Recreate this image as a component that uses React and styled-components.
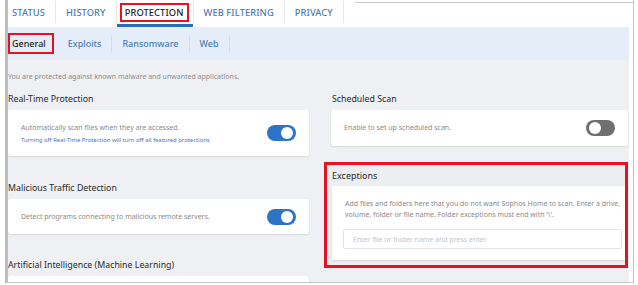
import React from "react";
import styled, { createGlobalStyle } from "styled-components";

const GlobalStyle = createGlobalStyle`
  html, body {
    margin: 0;
    padding: 0;
    background: #ffffff;
    font-family: "Noto Sans", "Liberation Sans", sans-serif;
  }
`;

const Page = styled.div`
  width: 638px;
  height: 285px;
  overflow: hidden;
  background: #fff;
  padding-left: 5px;
  box-sizing: border-box;
`;

const Frame = styled.div`
  width: 629px;
  height: 283px;
  box-sizing: border-box;
  border-left: 3px solid #bdbdbd;
  border-right: 1px solid #c4c4c4;
  border-bottom: 1px solid #c4c4c4;
  padding-right: 4px;
  overflow: hidden;
  display: flex;
  flex-direction: column;
`;

const TabBar = styled.div`
  display: flex;
  height: 27px;
  flex-shrink: 0;
  background: #fff;
`;

const Tab = styled.div`
  position: relative;
  display: flex;
  align-items: center;
  height: 22px;
  padding: ${(p) => (p.$active ? "0 4px 0 3px" : "0 10px")};
  font-size: 9.3px;
  font-weight: 500;
  letter-spacing: 0.1px;
  color: ${(p) => (p.$active ? "#222" : "#4a7db5")};
  border-right: 1px solid #e6e6e6;
  margin-top: 1px;
  &:first-child {
    padding-left: 4px;
  }
  ${(p) =>
    p.$active &&
    `
    &::after {
      content: "";
      position: absolute;
      left: 0;
      right: 0;
      bottom: -4px;
      height: 3px;
      background: #2a6db5;
    }
  `}
`;

const Marked = styled.span`
  border: 2px solid #e3141f;
  padding: ${(p) => p.$pad || "1px 3px"};
`;

const TopLine = styled.div`
  flex: 1;
  margin-left: 11px;
  margin-top: 2px;
  height: 0;
  border-top: 1px solid #c8c8c8;
  margin-right: -4px;
`;

const SubBar = styled.div`
  display: flex;
  align-items: center;
  height: 33px;
  flex-shrink: 0;
  background: #e5eef8;
`;

const SubTab = styled.div`
  display: flex;
  align-items: center;
  height: 18px;
  padding: 0 10px;
  font-size: 9px;
  font-weight: 500;
  color: ${(p) => (p.$active ? "#1e1e1e" : "#4a7db5")};
  border-right: ${(p) => (p.$active ? "none" : "1px solid #d6dfe9")};
  &:first-child {
    padding-left: 0;
    padding-right: 4px;
  }
`;

const Content = styled.div`
  flex: 1;
  background: #eef0f3;
  padding-top: 12px;
`;

const Intro = styled.div`
  font-size: 7px;
  line-height: 10px;
  color: #8e8e8e;
`;

const Columns = styled.div`
  display: grid;
  grid-template-columns: 301px 297px;
  column-gap: 22px;
  margin-top: 10px;
  align-items: start;
`;

const Column = styled.div`
  display: flex;
  flex-direction: column;
`;

const Heading = styled.div`
  font-size: 8.8px;
  line-height: 14px;
  color: #2a2a2a;
  margin-bottom: 4px;
  padding-left: ${(p) => p.$indent || 0}px;
`;

const Card = styled.div`
  background: #fff;
  border-radius: 3px;
  box-shadow: 0 1px 2px rgba(0, 0, 0, 0.1);
  display: flex;
  align-items: center;
  justify-content: space-between;
  height: ${(p) => p.$h}px;
  padding: 0 13px 0 13px;
  box-sizing: border-box;
  margin-bottom: ${(p) => p.$mb || 0}px;
`;

const CardText = styled.div`
  display: flex;
  flex-direction: column;
  gap: 3px;
`;

const Desc = styled.div`
  font-size: 7px;
  line-height: 10px;
  color: #8a8a8a;
`;

const Note = styled.div`
  font-size: 5.9px;
  line-height: 8px;
  color: #3d78c2;
`;

const Toggle = styled.div`
  width: 29px;
  height: 16px;
  border-radius: 8px;
  background: ${(p) => (p.$on ? "#2b74c7" : "#6d6f71")};
  position: relative;
  flex-shrink: 0;
  &::after {
    content: "";
    position: absolute;
    top: 2px;
    ${(p) => (p.$on ? "right: 3px;" : "left: 3px;")}
    width: 12px;
    height: 12px;
    border-radius: 50%;
    background: #fff;
  }
`;

const Highlight = styled.div`
  margin-top: 16px;
  margin-left: -7px;
  border: 3px solid #e3141f;
  padding: 0 0 5px 5px;
  background: #eef0f3;
`;

const PanelHead = styled.div`
  font-size: 9px;
  height: 21px;
  line-height: 21px;
  color: #2a2a2a;
  background: #eceef1;
`;

const Panel = styled.div`
  background: #fff;
  box-shadow: 0 1px 2px rgba(0, 0, 0, 0.12);
  padding: 12px 0 11px 11px;
`;

const PanelText = styled.div`
  font-size: 7px;
  line-height: 11px;
  color: #8a8a8a;
  padding-left: 2px;
  padding-right: 2px;
`;

const Field = styled.div`
  margin-top: 9px;
  margin-right: 3px;
  height: 20px;
  box-sizing: border-box;
  border: 1px solid #e2e4e6;
  border-radius: 2px;
  display: flex;
  align-items: center;
  padding-left: 9px;
  font-size: 7px;
  color: #c3c5c8;
`;

const tabs = ["STATUS", "HISTORY", "PROTECTION", "WEB FILTERING", "PRIVACY"];
const subTabs = ["General", "Exploits", "Ransomware", "Web"];

export default function App() {
  return (
    <>
      <GlobalStyle />
      <Page>
        <Frame>
          <TabBar>
            {tabs.map((t) => (
              <Tab key={t} $active={t === "PROTECTION"}>
                {t === "PROTECTION" ? <Marked>{t}</Marked> : t}
              </Tab>
            ))}
            <TopLine />
          </TabBar>
          <SubBar>
            {subTabs.map((t) => (
              <SubTab key={t} $active={t === "General"}>
                {t === "General" ? <Marked $pad="2px 6px 2px 2px">{t}</Marked> : t}
              </SubTab>
            ))}
          </SubBar>
          <Content>
            <Intro>You are protected against known malware and unwanted applications.</Intro>
            <Columns>
              <Column>
                <Heading>Real-Time Protection</Heading>
                <Card $h={46} $mb={25}>
                  <CardText>
                    <Desc>Automatically scan files when they are accessed.</Desc>
                    <Note>Turning off Real-Time Protection will turn off all featured protections</Note>
                  </CardText>
                  <Toggle $on />
                </Card>
                <Heading>Malicious Traffic Detection</Heading>
                <Card $h={35} $mb={24}>
                  <Desc>Detect programs connecting to malicious remote servers.</Desc>
                  <Toggle $on />
                </Card>
                <Heading>Artificial Intelligence (Machine Learning)</Heading>
                <Card $h={40} />
              </Column>
              <Column>
                <Heading $indent={1}>Scheduled Scan</Heading>
                <Card $h={36}>
                  <Desc>Enable to set up scheduled scan.</Desc>
                  <Toggle />
                </Card>
                <Highlight>
                  <PanelHead>Exceptions</PanelHead>
                  <Panel>
                    <PanelText>
                      Add files and folders here that you do not want Sophos Home to scan. Enter a drive,
                      volume, folder or file name. Folder exceptions must end with '\'.
                    </PanelText>
                    <Field>Enter file or folder name and press enter</Field>
                  </Panel>
                </Highlight>
              </Column>
            </Columns>
          </Content>
        </Frame>
      </Page>
    </>
  );
}
